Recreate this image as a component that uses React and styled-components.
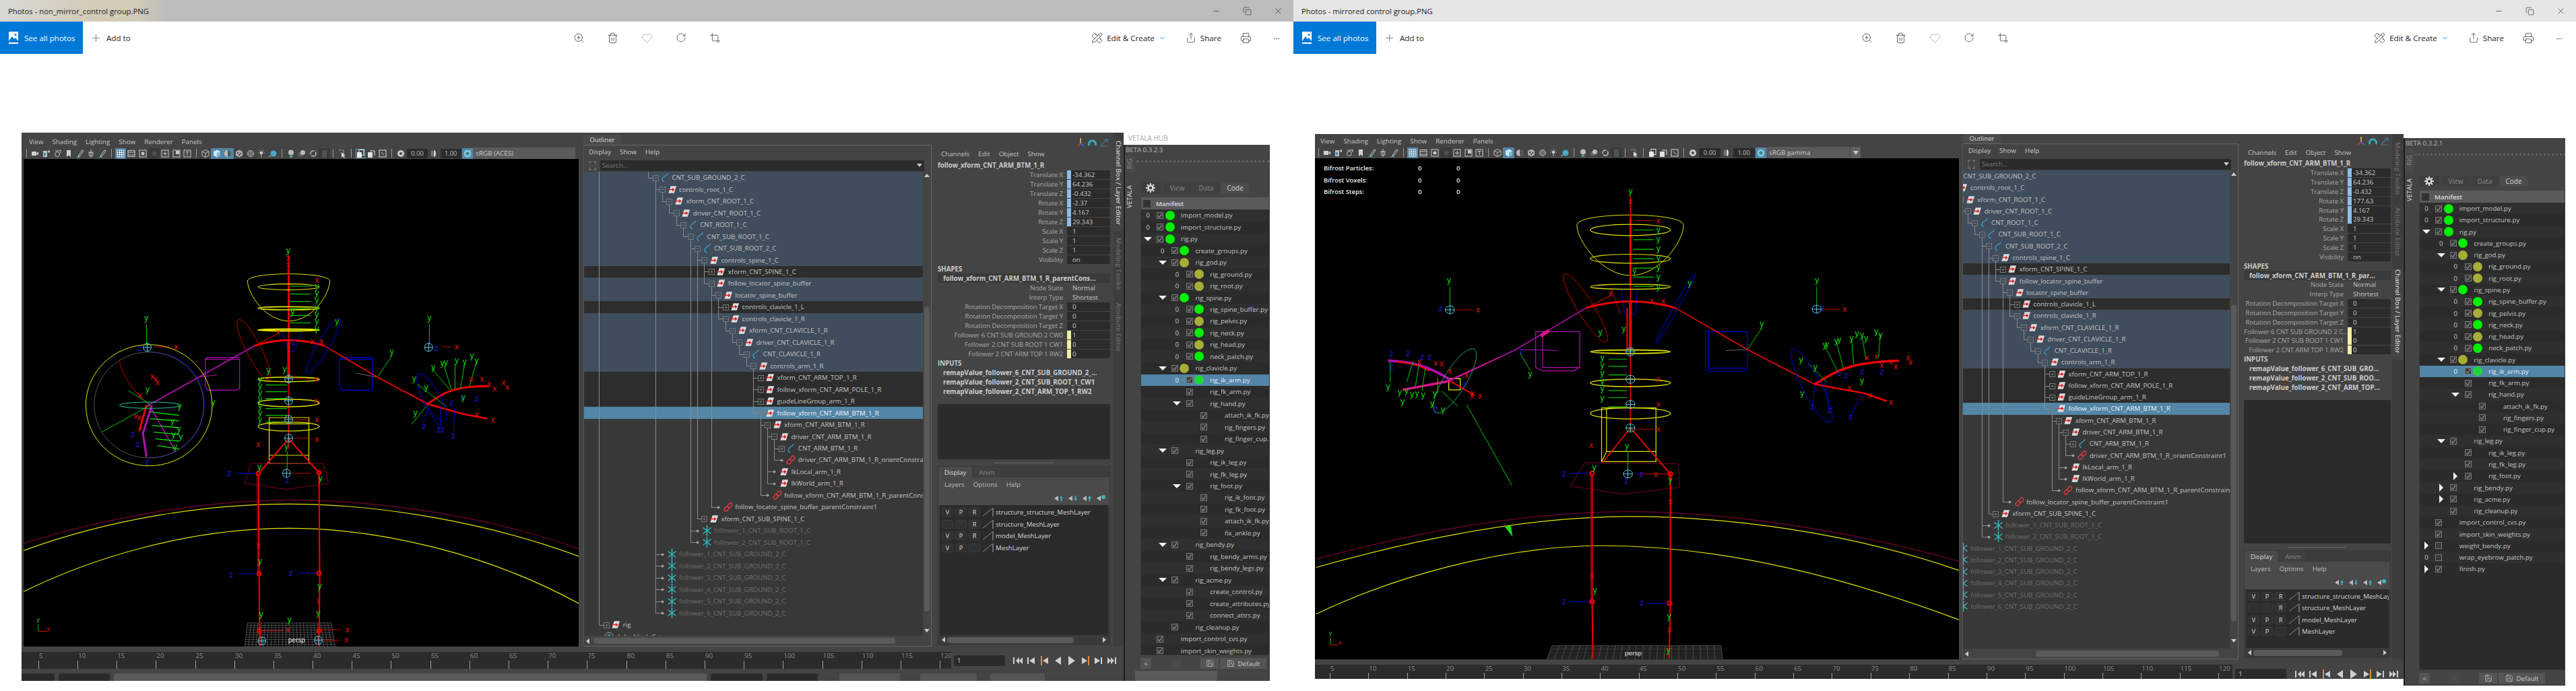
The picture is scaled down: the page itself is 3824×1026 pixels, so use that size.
import React from 'react';
import styled, { createGlobalStyle } from 'styled-components';
import { ZoomIn, Trash2, Heart, RotateCw, Crop, Share, Printer, Plus, Minus, Copy, X, ChevronDown, Save, PencilRuler } from 'lucide-react';

const Global = createGlobalStyle`
  html, body { margin: 0; padding: 0; background: #fff; }
  #root { width: 3824px; height: 1026px; overflow: hidden; }
  * { box-sizing: border-box; }
`;

/* ---------- Photos chrome ---------- */
const Page = styled.div`
  display: flex; width: 3824px; height: 1026px; overflow: hidden; background: #fff;
  font-family: "Open Sans", sans-serif; font-size: 9.7px; color: #c8c8c8;
`;
const Win = styled.section`flex: none; width: ${p => p.$w}px; height: 100%;`;
const TitleBar = styled.header`
  height: 32px; display: flex; align-items: center; padding-left: 12px;
  background: ${p => p.$bg}; color: #222; font-size: 11.3px; font-family: "Open Sans", sans-serif;
`;
const WinCtrls = styled.div`margin-left: auto; display: flex;`;
const WinCtrl = styled.span`width: 46px; height: 32px; display: flex; align-items: center; justify-content: center; color: #222;`;
const TopBar = styled.div`height: 48px; display: grid; grid-template-columns: 1fr auto 1fr; background: #fff; color: #222; font-size: 11.6px;`;
const BarLeft = styled.div`display: flex; align-items: center;`;
const SeeAll = styled.div`width: 123px; height: 48px; background: #0078d7; color: #fff; display: flex; align-items: center; gap: 9px; padding-left: 13px;`;
const AddTo = styled.div`display: flex; align-items: center; gap: 7px; margin-left: 11px;`;
const BarCenter = styled.div`display: flex; align-items: center;`;
const BarCell = styled.span`width: 50.5px; display: flex; justify-content: center; color: ${p => p.$c || '#222'};`;
const BarRight = styled.div`display: flex; align-items: center; justify-content: flex-end; padding-right: 2px;`;
const BarText = styled.span`display: flex; align-items: center; gap: ${p => p.$gap || 6}px; margin-right: ${p => p.$mr || 0}px;`;
const BarIcon = styled.span`width: 46px; margin-left: ${p => p.$ml || 0}px; display: flex; justify-content: center;`;

const Body = styled.div`display: flex; padding: ${p => p.$top}px 0 0 32px;`;
const MayaCol = styled.div`flex: none; width: ${p => p.$w}px; height: ${p => p.$h}px; background: #444; display: flex; flex-direction: column; overflow: hidden;`;
const Panels = styled.div`flex: none; height: ${p => p.$h}px; display: flex;`;

/* ---------- viewport ---------- */
const ViewCol = styled.div`flex: none; width: ${p => p.$w}px; display: flex; flex-direction: column; padding-top: ${p => p.$pt}px; padding-right: ${p => p.$pr}px;`;
const ViewMenu = styled.nav`height: 14px; display: flex; gap: 13px; align-items: center; padding-left: ${p => p.$pl}px; color: #c4c4c4; font-size: 9.8px;`;
const ToolRow = styled.div`height: 17px; margin-top: 2px; display: flex; align-items: center; padding-left: ${p => p.$pl}px; background: ${p => p.$bg || 'transparent'};`;
const TBtn = styled.span`flex: none; width: 16.6px; height: 16px; display: flex; align-items: center; justify-content: center;
  background: ${p => (p.$on ? '#5285a6' : p.$dark ? '#3a3a3a' : 'transparent')};`;
const TSep = styled.span`flex: none; width: 10.2px; height: 13px; display: flex; justify-content: center; &::after { content: ''; width: 1px; background: #999; }`;
const TField = styled.span`flex: none; width: ${p => p.$w}px; height: 14px; margin: 0 1px; background: #2b2b2b; color: #bbb; font-size: 9.4px; display: flex; align-items: center; justify-content: center;`;
const TSpace = styled.span`flex: none; width: ${p => p.$w}px; height: 17px; background: #5a5a5a; color: #ccc; font-size: 9.8px; display: flex; align-items: center; padding-left: 4px; position: relative;`;
const TDrop = styled.span`flex: none; width: 16px; height: 17px; background: #5f5f5f; display: flex; align-items: center; justify-content: center; border-left: 1px solid #444;`;
const Black = styled.div`flex: 1; min-height: 0; margin-top: ${p => p.$mt}px; margin-left: ${p => p.$ml}px; background: #000; position: relative; overflow: hidden;`;
const Scene = styled.svg`display: block; width: 100%; height: 100%; text { font-family: "Liberation Sans", sans-serif; font-size: 12.5px; text-anchor: middle; dominant-baseline: central; }`;
const GizmoText = styled.text`&& { font-size: 9px; }`;
const PerspText = styled.text`&& { font-size: 10px; }`;
const Hud = styled.div`position: absolute; top: 8px; left: 13px; display: grid; grid-template-columns: 140px 57px 20px; row-gap: 4px; color: #e8e8e8; font-size: 9.4px; font-weight: 600; line-height: 13.5px;`;

/* ---------- outliner ---------- */
const OutPanel = styled.div`flex: none; width: ${p => p.$w}px; margin-left: ${p => p.$ml}px; display: flex; flex-direction: column; background: #444;`;
const OutTabRow = styled.div`height: ${p => p.$h}px; display: flex; align-items: flex-end; padding-left: ${p => p.$pl}px;`;
const OutTab = styled.span`height: 15px; width: 56px; background: #4a4a4a; color: #ddd; display: flex; align-items: center; justify-content: center; border-radius: 2px 2px 0 0;`;
const OutBox = styled.div`flex: 1; min-height: 0; display: flex; flex-direction: column; border-top: 1px solid #666; border-left: 1px solid #555; border-right: 1px solid #666; border-bottom: 1px solid #666;`;
const OutMenu = styled.nav`height: 19px; display: flex; gap: 13px; align-items: center; padding-left: ${p => p.$pl}px; color: #ccc; font-size: 9.8px;`;
const SearchRow = styled.div`height: 17px; margin-top: 2px; display: flex; align-items: center; padding-right: 10px;`;
const SearchIcon = styled.span`width: ${p => p.$w}px; display: flex; justify-content: center; flex: none;`;
const SearchInput = styled.div`flex: 1; height: 16px; background: #2b2b2b; border-radius: 2px; color: #777; padding-left: 3px; display: flex; align-items: center; justify-content: space-between; padding-right: 3px;`;
const TreeWrap = styled.div`flex: 1; min-height: 0; display: flex; margin-top: 1px;`;
const Tree = styled.div`flex: 1; min-width: 0; position: relative; overflow: hidden; background: #383838;`;
const Row = styled.div`height: ${p => p.$h}px; display: flex; align-items: center; white-space: nowrap;
  background: ${p => ({ s: '#404d5d', d: '#2d2d2d', l: '#5285a6' }[p.$st] || 'transparent')};
  color: ${p => (p.$dim ? '#6f6f6f' : p.$st === 'l' ? '#f4f4f4' : '#c4c4c4')};`;
const RowIcon = styled.span`flex: none; width: 14px; height: 14px; margin-left: ${p => p.$x}px; margin-right: 3.5px; display: flex; align-items: center; justify-content: center;`;
const Overlay = styled.svg`position: absolute; top: 0; left: 0; pointer-events: none;`;
const VScroll = styled.div`flex: none; width: 12px; display: flex; flex-direction: column; align-items: center; position: relative; padding-top: ${p => p.$top}px;`;
const VThumb = styled.div`width: 8px; height: ${p => p.$h}px; background: #5a5a5a; border-radius: 4px; margin-top: ${p => p.$mt}px; margin-bottom: 26px;`;
const HScroll = styled.div`flex: none; height: 15px; display: flex; align-items: center; padding-left: 3px; color: #bbb;`;
const HThumb = styled.div`height: 9px; width: ${p => p.$w}px; margin-left: ${p => p.$ml}px; background: #5a5a5a; border-radius: 4px;`;

/* ---------- channel box ---------- */
const ChanPanel = styled.div`flex: none; width: ${p => p.$w}px; margin-left: ${p => p.$ml}px; display: flex; background: #444;`;
const ChanMain = styled.div`flex: 1; min-width: 0; display: flex; flex-direction: column; padding: 0 ${p => p.$pr}px 0 ${p => p.$pl}px;`;
const ChanHead = styled.div`height: ${p => p.$h}px; display: flex; align-items: flex-end; justify-content: flex-end; gap: 5px; padding-right: 3px;`;
const ChanMenu = styled.nav`height: 20px; display: flex; gap: 13px; align-items: center; padding-left: ${p => p.$pl}px; color: #c4c4c4; font-size: 9.8px;`;
const ChanName = styled.div`height: ${p => p.$h}px; display: flex; align-items: center; color: #ccc; font-weight: 700; white-space: nowrap; overflow: hidden; padding-left: ${p => p.$pl || 0}px; background: ${p => p.$bg || 'transparent'};`;
const ChanRow = styled.div`height: ${p => p.$h}px; display: flex; align-items: center; justify-content: flex-end; white-space: nowrap;`;
const ChanLabel = styled.span`flex: 1; min-width: 0; text-align: right; color: #a8a8a8; letter-spacing: -0.1px;`;
const ChanVal = styled.span`flex: none; width: 64px; height: 13px; margin-left: 6px; background: ${p => (p.$plain ? 'transparent' : '#2b2b2b')}; border-radius: 2px; color: #c6c6c6; display: flex; align-items: center; gap: 2px;`;
const Chip = styled.span`flex: none; width: 6px; height: 13px; background: ${p => p.$c || 'transparent'};`;
const DarkBox = styled.div`flex: none; height: ${p => p.$h}px; margin-top: ${p => p.$mt}px; background: #2b2b2b; border-radius: 2px;`;
const Handle = styled.div`flex: none; height: 10px; display: flex; align-items: center; justify-content: center; &::after { content: ''; width: 86px; border-top: 1px dotted #888; }`;
const LayerBox = styled.div`flex: 1; min-height: 0; display: flex; flex-direction: column; background: #3c3c3c; border: 1px solid #383838; margin-bottom: 2px;`;
const LayerTabs = styled.div`height: 16px; display: flex; gap: 2px;`;
const LayerTab = styled.span`width: ${p => p.$w}px; background: ${p => (p.$on ? '#4a4a4a' : '#404040')}; color: ${p => (p.$on ? '#ddd' : '#8a8a8a')}; display: flex; align-items: center; justify-content: center; border-radius: 2px 2px 0 0;`;
const LayerMenu = styled.nav`height: 20px; background: #4a4a4a; display: flex; gap: 13px; align-items: center; padding-left: 9px; color: #bbb; font-size: 9.8px;`;
const LayerTools = styled.div`height: 21px; background: #4a4a4a; display: flex; align-items: center; justify-content: flex-end; gap: 7px; padding-right: 5px;`;
const LayerList = styled.div`flex: 1; min-height: 0; margin: 0 2px; background: #2b2b2b; padding-top: 2px; overflow: hidden;`;
const LayerRow = styled.div`height: ${p => p.$h}px; display: flex; align-items: center; padding-left: 3px; white-space: nowrap; color: #d6d6d6;`;
const Vpr = styled.span`flex: none; width: 17px; height: 13px; margin-right: 3px; border-radius: 3px; background: #303030; border: 1px solid #3b3b3b; color: ${p => (p.$dim ? '#3f3f3f' : '#ddd')}; display: flex; align-items: center; justify-content: center; font-size: 9.2px;`;
const LayerSlash = styled.span`flex: none; width: 17px; height: 13px; margin-right: 3px; display: flex;`;
const LayerScroll = styled.div`flex: none; height: 14px; margin: 0 2px; display: flex; align-items: center; justify-content: space-between; padding: 0 3px; background: #3a3a3a;`;
const LayerThumb = styled.div`height: 9px; width: ${p => p.$w}px; background: #5a5a5a; border-radius: 4px; margin-right: auto; margin-left: 3px;`;

const VTabs = styled.aside`flex: none; width: ${p => p.$w}px; display: flex; flex-direction: column; padding-top: 10px; background: #3d3d3d;`;
const VTab = styled.span`writing-mode: vertical-rl; white-space: nowrap; font-size: 9.8px; line-height: ${p => p.$w}px; letter-spacing: .15px; padding: 2px 0 9px; margin-bottom: 8px;
  background: ${p => (p.$on ? '#444' : 'transparent')}; color: ${p => (p.$on ? '#e8e8e8' : '#777')};`;

/* ---------- time bar ---------- */
const TimeRow = styled.div`flex: none; height: ${p => p.$h}px; display: flex; margin-top: ${p => p.$mt}px;`;
const Ruler = styled.div`flex: none; width: ${p => p.$w}px; background: #2b2b2b; display: flex; padding-left: ${p => p.$pl}px; overflow: hidden;`;
const RulerCell = styled.div`flex: none; width: ${p => p.$w}px; display: flex; flex-direction: column; justify-content: space-between;`;
const RulerNum = styled.span`color: #8c8c8c; font-size: 9.8px; line-height: 12px; padding-left: 1px; white-space: nowrap;`;
const RulerTick = styled.span`width: 1px; height: ${p => p.$h}px; background: #a0a0a0;`;
const FrameField = styled.div`flex: none; width: 76px; height: 16px; margin: ${p => p.$mt}px 0 0 ${p => p.$ml}px; background: #2b2b2b; border-radius: 2px; color: #ccc; padding-left: 5px; line-height: 16px;`;
const Play = styled.div`flex: none; display: flex; margin: ${p => p.$mt}px 0 0 ${p => p.$ml}px;`;
const RangeRow = styled.div`flex: 1; min-height: 0; display: flex; gap: 6px; padding-top: 7px;`;
const RangeBlock = styled.div`flex: none; width: ${p => p.$w}px; height: 20px; background: ${p => p.$c}; margin-left: ${p => p.$ml || 0}px; border-radius: 2px;`;

/* ---------- vetala ---------- */
const Vet = styled.aside`flex: none; width: ${p => p.$w}px; display: flex; flex-direction: column;`;
const VetHub = styled.div`flex: none; height: ${p => p.$h}px; padding-left: 7px; color: #aaa; background: #fff; font-size: 10px; line-height: 16px; white-space: nowrap; overflow: hidden;`;
const VetDark = styled.div`flex: 1; min-height: 0; background: #444; border-left: 2px solid #1d1d1d; display: flex; flex-direction: column; overflow: hidden;`;
const VetBeta = styled.div`flex: none; height: 16px; line-height: 16px; padding-left: 1px; color: #bbb;`;
const VetBody = styled.div`flex: 1; min-height: 0; display: flex;`;
const Rail = styled.div`flex: none; width: 14px; display: flex; flex-direction: column;`;
const RailTab = styled.span`writing-mode: vertical-rl; transform: rotate(180deg); height: ${p => p.$h}px; margin-bottom: ${p => p.$mb}px; background: ${p => (p.$on ? '#444' : '#4a4a4a')}; color: ${p => (p.$on ? '#e0e0e0' : '#888')}; text-align: center; line-height: 14px;`;
const VetMain = styled.div`flex: 1; min-width: 0; display: flex; flex-direction: column; padding-left: ${p => p.$pl}px;`;
const VetHandle = styled.div`flex: none; height: 17px; display: flex; align-items: center; margin-left: -6px; &::after { content: ''; flex: 1; border-top: 3px dotted #5e5e5e; }`;
const VetTabs = styled.div`flex: none; height: 16px; margin-top: 23px; display: flex; gap: 2px;`;
const VetGear = styled.span`width: 30px; margin-right: 2px; display: flex; align-items: center; justify-content: center; background: #3e3e3e;`;
const VetTab = styled.span`width: 41px; background: ${p => (p.$on ? '#4c4c4c' : '#404040')}; color: ${p => (p.$on ? '#ddd' : '#888')}; display: flex; align-items: center; justify-content: center; font-size: 10px;`;
const VetTree = styled.div`flex: none; height: ${p => p.$h}px; margin-top: 6px; background: #2b2b2b; border: 1px solid #3a3a3a; border-top: 0; overflow: hidden;`;
const VetHead = styled.div`height: 18px; background: #5a5a5a; display: flex; align-items: center; padding-left: 3px; gap: 8px; color: #ddd; font-weight: 600;
  &::before { content: ''; width: 11px; height: 11px; background: #333; }`;
const VRow = styled.div`height: ${p => p.$h}px; display: flex; align-items: center; white-space: nowrap; padding-left: ${p => 4 + 21.7 * p.$lv}px;
  background: ${p => (p.$sel ? '#5285a6' : p.$odd ? '#2f2f2f' : '#2b2b2b')}; color: ${p => (p.$sel ? '#eef' : '#c4c4c4')};`;
const Tri = styled.span`flex: none; width: 12px; height: 12px; margin-right: 7.3px; display: flex; align-items: center; justify-content: center;`;
const Check = styled.span`flex: none; width: 10px; height: 10px; margin-right: 2.5px; background: #3a3a3a; border: 1px solid #777; display: flex;`;
const Dot = styled.span`flex: none; width: 14px; height: 14px; margin-right: 9px; border-radius: 50%; background: ${p => p.$c || 'transparent'};`;
const VetBtns = styled.div`flex: none; height: 22px; margin-top: 1px; display: flex; align-items: center; color: #bbb;`;
const VBtn = styled.span`flex: none; width: ${p => p.$w}px; height: 16px; margin-left: ${p => p.$ml || 0}px; background: ${p => p.$c || '#555'}; color: ${p => (p.$dim ? '#555' : '#ccc')}; display: flex; align-items: center; justify-content: center; gap: 5px;`;
const VetFoot = styled.div`flex: none; height: 15px; width: 122px; margin-left: -8px; background: #5a5a5a;`;

/* ---------- data ---------- */
const TREE = [
  [0, 'CNT_SUB_GROUND_2_C', 'c', '-', 's'], [1, 'controls_root_1_C', 'x', '-', 's'], [2, 'xform_CNT_ROOT_1_C', 'x', '-', 's'],
  [3, 'driver_CNT_ROOT_1_C', 'x', '-', 's'], [4, 'CNT_ROOT_1_C', 'c', '-', 's'], [5, 'CNT_SUB_ROOT_1_C', 'c', '-', 's'],
  [6, 'CNT_SUB_ROOT_2_C', 'c', '-', 's'], [7, 'controls_spine_1_C', 'x', '-', 's'], [8, 'xform_CNT_SPINE_1_C', 'x', '+', 'd'],
  [8, 'follow_locator_spine_buffer', 'x', '-', 's'], [9, 'locator_spine_buffer', 'x', '-', 's'], [10, 'controls_clavicle_1_L', 'x', '+', 'd'],
  [10, 'controls_clavicle_1_R', 'x', '-', 's'], [11, 'xform_CNT_CLAVICLE_1_R', 'x', '-', 's'], [12, 'driver_CNT_CLAVICLE_1_R', 'x', '-', 's'],
  [13, 'CNT_CLAVICLE_1_R', 'c', '-', 's'], [14, 'controls_arm_1_R', 'x', '-', 's'], [15, 'xform_CNT_ARM_TOP_1_R', 'x', '+', 'd'],
  [15, 'follow_xform_CNT_ARM_POLE_1_R', 'x', '+', 'd'], [15, 'guideLineGroup_arm_1_R', 'x', '+', 'd'], [15, 'follow_xform_CNT_ARM_BTM_1_R', 'x', '-', 'l'],
  [16, 'xform_CNT_ARM_BTM_1_R', 'x', '-', ''], [17, 'driver_CNT_ARM_BTM_1_R', 'x', '-', ''], [18, 'CNT_ARM_BTM_1_R', 'c', '+', ''],
  [18, 'driver_CNT_ARM_BTM_1_R_orientConstraint1', 'k', '.', ''], [17, 'IkLocal_arm_1_R', 'x', '.', ''], [17, 'IkWorld_arm_1_R', 'x', '.', ''],
  [16, 'follow_xform_CNT_ARM_BTM_1_R_parentConstraint1', 'k', '.', ''], [9, 'follow_locator_spine_buffer_parentConstraint1', 'k', '.', ''],
  [7, 'xform_CNT_SUB_SPINE_1_C', 'x', '+', ''], [6, 'follower_1_CNT_SUB_ROOT_1_C', 'a', '.', 'f'], [6, 'follower_2_CNT_SUB_ROOT_1_C', 'a', '.', 'f'],
  [1, 'follower_1_CNT_SUB_GROUND_2_C', 'a', '.', 'f'], [1, 'follower_2_CNT_SUB_GROUND_2_C', 'a', '.', 'f'], [1, 'follower_3_CNT_SUB_GROUND_2_C', 'a', '.', 'f'],
  [1, 'follower_4_CNT_SUB_GROUND_2_C', 'a', '.', 'f'], [1, 'follower_5_CNT_SUB_GROUND_2_C', 'a', '.', 'f'], [1, 'follower_6_CNT_SUB_GROUND_2_C', 'a', '.', 'f'],
  [-7, 'rig', 'x', '+', ''], [-8, 'defaultLightSet', 'l', '', ''],
];
const G = '#00f000', O = '#a8ad38';
const V_COMMON = [
  [0, 'import_model.py', 0, G], [0, 'import_structure.py', 0, G], [0, 'rig.py', 'd', G], [1, 'create_groups.py', 0, G], [1, 'rig_god.py', 'd', O],
  [2, 'rig_ground.py', 0, O], [2, 'rig_root.py', 0, O], [1, 'rig_spine.py', 'd', G], [2, 'rig_spine_buffer.py', 0, G], [2, 'rig_pelvis.py', 0, O],
  [2, 'rig_neck.py', 0, G], [2, 'rig_head.py', 0, O], [2, 'neck_patch.py', 0, G], [1, 'rig_clavicle.py', 'd', O], [2, 'rig_ik_arm.py', 0, '#1fd63a', 1],
  [2, 'rig_fk_arm.py'], [2, 'rig_hand.py', 'd'], [3, 'attach_ik_fk.py'], [3, 'rig_fingers.py'], [3, 'rig_finger_cup.py'], [1, 'rig_leg.py', 'd'],
  [2, 'rig_ik_leg.py'], [2, 'rig_fk_leg.py'],
];
const V_LEFT = [...V_COMMON, [2, 'rig_foot.py', 'd'], [3, 'rig_ik_foot.py'], [3, 'rig_fk_foot.py'], [3, 'attach_ik_fk.py'], [3, 'fix_ankle.py'],
  [1, 'rig_bendy.py', 'd'], [2, 'rig_bendy_arms.py'], [2, 'rig_bendy_legs.py'], [1, 'rig_acme.py', 'd'], [2, 'create_control.py'], [2, 'create_attributes.py'],
  [2, 'connect_attrs.py'], [1, 'rig_cleanup.py'], [0, 'import_control_cvs.py'], [0, 'import_skin_weights.py']];
const V_RIGHT = [...V_COMMON, [2, 'rig_foot.py', 'r'], [1, 'rig_bendy.py', 'r'], [1, 'rig_acme.py', 'r'], [1, 'rig_cleanup.py'], [0, 'import_control_cvs.py'],
  [0, 'import_skin_weights.py'], [0, 'weight_bendy.py', 'r', null, 0, 1], [0, 'wrap_eyebrow_patch.py', 0, null, 0, 1], [0, 'finish.py', 'r']];

const chanRows = (rotX, f6, sub) => ({
  main: [['Translate X', '-34.362', '#8fbfe8'], ['Translate Y', '64.236', '#8fbfe8'], ['Translate Z', '-0.432', '#8fbfe8'], ['Rotate X', rotX, '#8fbfe8'],
    ['Rotate Y', '4.167', '#8fbfe8'], ['Rotate Z', '29.343', '#8fbfe8'], ['Scale X', '1'], ['Scale Y', '1'], ['Scale Z', '1'], ['Visibility', 'on']],
  sub,
  shapes: [['Node State', 'Normal', null, 1], ['Interp Type', 'Shortest', null, 1], ['Rotation Decomposition Target X', '0'], ['Rotation Decomposition Target Y', '0'],
    ['Rotation Decomposition Target Z', '0'], [f6, '1', '#f0f0a8'], ['Follower 2 CNT SUB ROOT 1 CW1', '0', '#f0f0a8'], ['Follower 2 CNT ARM TOP 1 RW2', '0', '#f0f0a8']],
});
const LAYERS = [['V', 'P', 'R', 'structure_structure_MeshLayer'], ['', 'dim', 'R', 'structure_MeshLayer'], ['V', 'P', 'R', 'model_MeshLayer'], ['V', 'P', '', 'MeshLayer']];

/* ---------- small drawings ---------- */
const OutIcon = ({ k }) => {
  if (k === 'x') return <svg width="15" height="13" viewBox="0 0 15 13"><path d="M5 1h9l-3.5 11H1.5z" fill="#dcdcdc" /><path d="M1 6.5h8" stroke="#e02020" strokeWidth="1.6" /><path d="M7.5 3.5 11.5 6.5 7.5 9.5z" fill="#e02020" /></svg>;
  if (k === 'c') return <svg width="12" height="15" viewBox="0 0 12 15"><path d="M10 1C11 4 2 6 2 10c0 2 1 3 3 4" fill="none" stroke="#3f9fd0" strokeWidth="1.3" /></svg>;
  if (k === 'k') return <svg width="14" height="14" viewBox="0 0 14 14"><g fill="none" stroke="#d63a3a" strokeWidth="1.5"><rect x="7" y="0.8" width="5" height="7.5" rx="2.4" transform="rotate(40 9.5 4.5)" /><rect x="2" y="5.8" width="5" height="7.5" rx="2.4" transform="rotate(40 4.5 9.5)" /></g></svg>;
  if (k === 'a') return <svg width="13" height="16" viewBox="0 0 13 16"><g stroke="#35b8c0" strokeWidth="1.5"><path d="M6.5 0v16" /><path d="M0.5 3.5l12 9" /><path d="M12.5 3.5l-12 9" /></g></svg>;
  return <svg width="14" height="14" viewBox="0 0 14 14"><circle cx="7" cy="7" r="6" fill="none" stroke="#aaa" /><circle cx="7" cy="7" r="3" fill="#38a8c0" /></svg>;
};

const Connectors = ({ base, pitch, w }) => {
  const xc = L => Math.round(base + 10.4 * L) + 0.5;
  const yc = i => Math.round(pitch * (i + 0.5)) + 0.5;
  const out = [];
  TREE.forEach(([L, , , m], i) => {
    if (!m) return;
    let j = i - 1;
    while (j >= 0 && TREE[j][0] !== L - 1 && TREE[j][0] >= L) j--;
    const hasParent = j >= 0 && TREE[j][0] === L - 1;
    const yp = hasParent ? yc(j) + 4 : -2;
    const x = xc(L - 1), y = yc(i), ex = xc(L);
    out.push(<path key={'l' + i} d={`M${x} ${yp}V${y}H${m === '.' ? ex : ex - 4}`} fill="none" stroke="#8c8c8c" />);
    if (m === '.') out.push(<circle key={'d' + i} cx={ex} cy={y} r="2" fill="#9a9a9a" />);
    else out.push(
      <g key={'e' + i} fill="none" stroke="#777">
        <rect x={ex - 4} y={y - 4} width="8" height="8" />
        <path d={`M${ex - 2} ${y}h4`} />
        {m === '+' && <path d={`M${ex} ${y - 2}v4`} />}
      </g>);
  });
  return <Overlay width={w} height={pitch * TREE.length}>{out}</Overlay>;
};

const TbGlyphs = {
  cam: <path d="M2 4h7v6H2zM9.5 6 12 4.5v5L9.5 8z" fill="#d0d0d0" />,
  cam2: <g fill="#c0c0c0"><rect x="2" y="3" width="6" height="9" /><path d="M9 3l3-1v4l-3-1z" /><rect x="3" y="6" width="3" height="4" fill="#48a" /></g>,
  cam3: <g fill="none" stroke="#c0c0c0"><circle cx="6" cy="8" r="3.5" /><path d="M3 3h5l3-1v4" /></g>,
  book: <path d="M4 2h6v10L7 9.5 4 12z" fill="#d0d0d0" />,
  pen: <g fill="none" stroke="#c8c8c8"><path d="M10 2 5 9 4 12l3-2 5-7z" /><path d="M1 12.5h6" stroke="#38a8c0" /></g>,
  pen2: <g fill="none" stroke="#c8c8c8"><path d="M7 1v12M3 5h8" /><circle cx="7" cy="8" r="3" /></g>,
  grid: <g fill="none" stroke="#e8e8e8"><rect x="2" y="2" width="10" height="10" /><path d="M2 5.5h10M2 8.5h10M5.5 2v10M8.5 2v10" /></g>,
  film: <g fill="none" stroke="#c8c8c8"><rect x="2" y="2.5" width="10" height="9" /><path d="M2 5h10M2 9h10" /></g>,
  mask: <g><rect x="2" y="2" width="10" height="10" fill="none" stroke="#c8c8c8" /><circle cx="7" cy="7" r="2.5" fill="#c8c8c8" /></g>,
  dark: <circle cx="7" cy="7" r="3.5" fill="#4e4e4e" />,
  fit: <g fill="none" stroke="#c8c8c8"><rect x="2" y="2" width="10" height="10" /><path d="M7 4v6M4 7h6" /></g>,
  res: <g><rect x="2" y="2" width="10" height="10" fill="none" stroke="#c8c8c8" /><rect x="6" y="3" width="5" height="5" fill="#c8c8c8" /></g>,
  text: <g fill="none" stroke="#c8c8c8"><rect x="2" y="2" width="10" height="10" /><path d="M4.5 4.5h5M7 4.5v5.5" /></g>,
  cube: <g fill="none" stroke="#bbb"><path d="M7 1.5 12 4v6l-5 2.5L2 10V4z" /><path d="M2 4l5 2.5L12 4M7 6.5v6" /></g>,
  solid: <g><path d="M7 1.5 12 4v6l-5 2.5L2 10V4z" fill="#cfe8f0" /><path d="M7 6.5 12 4v6l-5 2.5z" fill="#7fb8cc" /></g>,
  half: <g><circle cx="7" cy="7" r="5" fill="#bbb" /><path d="M7 2a5 5 0 0 1 0 10z" fill="#555" /></g>,
  tex: <g fill="#aaa"><path d="M7 1.5 12 4v6l-5 2.5L2 10V4z" /><path d="M4 5h2v2H4zM8 6h2v2H8zM6 8h2v2H6z" fill="#444" /></g>,
  check: <g fill="#aaa"><circle cx="7" cy="7" r="5" /><path d="M3 5h8M3 7h8M3 9h8M5 3v8M7 3v8M9 3v8" stroke="#444" strokeWidth=".7" /></g>,
  light: <g stroke="#ccc"><circle cx="7" cy="6" r="2" fill="#ccc" /><path d="M7 1v1M2 6h1M11 6h1M3.5 2.5l1 1M10.5 2.5l-1 1M7 9v3" /></g>,
  sphere: <g><circle cx="8" cy="7" r="4.5" fill="#4aa8c8" /><path d="M1 11h3" stroke="#ccc" /></g>,
  bulb: <g><circle cx="7" cy="5.5" r="4" fill="#bbb" /><path d="M5 10h4v3H5z" fill="#38a8a8" /></g>,
  ball: <g><circle cx="5.5" cy="8" r="3.5" fill="#666" /><circle cx="8.5" cy="5.5" r="3.5" fill="#bbb" /></g>,
  ring: <circle cx="7" cy="7" r="4" fill="none" stroke="#bbb" strokeWidth="1.6" strokeDasharray="9 2" />,
  box: <rect x="4" y="2" width="7" height="11" fill="#4e5558" />,
  sel: <g><path d="M2 2h7v7" fill="none" stroke="#bbb" strokeDasharray="1.5 1" /><path d="M6 5v8l2-2 2 3 1-1-2-3h3z" fill="#ddd" /></g>,
  iso: <g fill="#e8e8e8"><rect x="2" y="5" width="7" height="8" /><rect x="5" y="1.5" width="7" height="8" fill="none" stroke="#e8e8e8" /></g>,
  iso2: <g fill="#e0e0e0"><rect x="2" y="5" width="7" height="8" /><path d="M5 3h7v7" fill="none" stroke="#e0e0e0" /></g>,
  pen3: <g fill="none" stroke="#ddd"><rect x="2" y="2" width="10" height="10" /><path d="M5 5l4 4" /></g>,
  lens: <g><circle cx="7" cy="7" r="5" fill="#ccc" /><circle cx="7" cy="7" r="2" fill="#444" /></g>,
  gain: <g><path d="M3 3h3v8H3z" fill="#777" /><path d="M7 2c4 0 4 10 0 10z" fill="#ddd" /></g>,
  disc: <g><circle cx="7" cy="7" r="5.5" fill="#7fc8d8" /><circle cx="7" cy="7" r="2.5" fill="#3f7f90" /></g>,
};
const Tb = ({ k, on, dark, border }) => (
  <TBtn $on={on} $dark={dark}><svg width="14" height="14" viewBox="0 0 14 14">{TbGlyphs[k]}{border && <rect x=".5" y=".5" width="13" height="13" fill="none" stroke="#5aa0c8" />}</svg></TBtn>
);
const Toolbar = ({ right }) => {
  const a = ['cam', 'cam2', 'cam3', 'book', 'pen', 'pen2', 'pen'];
  return (
    <>
      <TSep />{a.map((k, i) => <Tb key={i} k={k} />)}<TSep />
      <Tb k="grid" on /><Tb k="film" /><Tb k="mask" /><Tb k="dark" dark /><Tb k="fit" /><Tb k="res" /><Tb k="text" /><TSep />
      <Tb k="cube" /><Tb k="solid" on /><Tb k="half" on={!right} /><Tb k="tex" /><Tb k="check" /><Tb k="light" /><Tb k="sphere" /><TSep />
      <Tb k="bulb" /><Tb k="ball" /><Tb k="ring" /><Tb k="box" dark /><TSep /><Tb k="sel" /><TSep />
      <Tb k="iso" border={!right} /><Tb k="iso2" /><Tb k="pen3" /><TSep /><Tb k="lens" />
      <TField $w={right ? 32 : 31}>0.00</TField><Tb k="gain" /><TField $w={right ? 32 : 31}>1.00</TField><Tb k="disc" on />
      {right
        ? <><TSpace $w={124}>sRGB gamma</TSpace><TDrop><svg width="8" height="6"><path d="M0 0h8L4 6z" fill="#ccc" /></svg></TDrop></>
        : <TSpace $w={152}>sRGB (ACES)</TSpace>}
    </>
  );
};

/* ---------- skeleton scene helpers ---------- */
const L = ({ d, c, w = 1 }) => <path d={d} fill="none" stroke={c} strokeWidth={w} vectorEffect="non-scaling-stroke" />;
const E = ({ e, c, w = 1 }) => <ellipse cx={e[0]} cy={e[1]} rx={e[2]} ry={e[3]} transform={e[4] ? `rotate(${e[4]} ${e[0]} ${e[1]})` : undefined} fill="none" stroke={c} strokeWidth={w} vectorEffect="non-scaling-stroke" />;
const YEL = '#e2e200', RED = '#f00000', CRIM = '#7a0030', MAG = '#b010b0', BLU = '#0000e0', GRN = '#00c800', CY = '#58c8e0';
const labelCol = { x: '#e01010', y: '#10d010', z: '#1818e0' };

const gridLines = (x0, x1, bx0, bx1, y0, y1) => {
  const parts = [];
  for (let i = 0; i <= 24; i++) { const t = i / 24; parts.push(`M${x0 + (x1 - x0) * t} ${y0}L${bx0 + (bx1 - bx0) * t} ${y1}`); }
  for (let i = 0; i <= 10; i++) { const t = i / 10; const y = y0 + (y1 - y0) * t; parts.push(`M${x0 + (bx0 - x0) * t} ${y}L${x1 + (bx1 - x1) * t} ${y}`); }
  return parts.join('');
};

const sceneLeft = {
  sx: 1 / 1.867, ox: 30, oy: 190, vx: 35, vy: 236, w: 824, h: 724,
  lines: [
    ['M10 1882C250 1740 520 1675 744 1675C1000 1675 1300 1760 1548 1908', YEL, 1.2], ['M10 1850C250 1730 520 1658 750 1658C1000 1658 1300 1730 1548 1875', CRIM, 1.2],
    ['M10 2065C180 1930 450 1783 744 1783C1000 1783 1300 1900 1548 2118', YEL, 1.2],
    [gridLines(630, 862, 622, 873, 2205, 2310), '#4a4a4a', 1],
    ['M630 680C640 640 850 640 858 680C858 740 810 860 745 860C680 860 630 740 630 680', YEL, 1],
    ['M690 1290H800V1495H690ZM690 1318H800M692 1458H800', YEL, 1.2], ['M640 1495L840 1495L855 1582L738 1610L622 1582Z', CRIM, 1],
    ['M357 998C450 1000 510 1100 510 1230C510 1370 440 1470 357 1470', BLU, 1], ['M275 1040C290 1130 330 1200 360 1235', '#c00000', 1],
    ['M513 1030H608V1160L600 1168H520L513 1150ZM513 1030L520 1022H608', MAG, 1.2], ['M885 1030H977V1160L970 1168H892L885 1150ZM885 1030L892 1022H977', BLU, 1.2],
    ['M725 905L745 995L760 995L780 905', BLU, 1], ['M545 1100L495 1110', MAG, 1], ['M930 1092L990 1110', '#666', 1],
    ['M350 875V965M1134 875V965M1030 1015L990 1110M740 1440V1520M1085 1320L1130 1230', GRN, 1],
    ['M370 975H415M1168 975H1195M750 1538H805M750 1300H805M750 1382H805M670 2240H730M835 2235H890M835 2282H885M750 1118H805', '#c00000', 1],
    ['M598 1538H655M605 1986H655M770 1983H825', BLU, 1],
    ['M748 705H810M748 740H805M748 773H805M748 805H805M748 835H805M748 868H805M680 1145H740M680 1175H740M680 1205H740M680 1250H740M680 1280H740M680 1310H740', GRN, 1.2],
    ['M744 565V1430', RED, 1.5], ['M744 660V900', RED, 2.5], ['M744 950V1115', RED, 4], ['M650 970Q744 920 843 970', RED, 3], ['M650 970L715 915', RED, 1],
    ['M650 970L495 1110L350 1240', MAG, 1.8], ['M843 970L990 1110L1130 1230', RED, 1.6],
    ['M1125 1235C1170 1180 1200 1150 1300 1150', RED, 3], ['M1130 1230L1230 1275L1295 1295', RED, 2.5], ['M1130 1228L1060 1170', RED, 1.5],
    ['M1190 1165L1140 1070M1195 1165L1175 1060M1205 1165L1205 1050M1220 1160L1232 1050M1245 1150L1265 1040M1100 1140L1180 1240', GRN, 1],
    ['M1130 1250L1115 1330M1165 1240L1165 1340M1205 1250L1200 1350M1120 1230L1165 1340', BLU, 1],
    ['M365 1235L340 1360L350 1465', MAG, 3], ['M360 1240L430 1440', MAG, 1.5], ['M350 1235L330 1350', RED, 3], ['M228 1353L360 1235M360 1230L300 1170', GRN, 1],
    ['M360 1265L440 1280M360 1295L440 1305M365 1325L440 1335M370 1355L440 1365M375 1385L440 1395M380 1415L440 1430', '#10e010', 1.4],
    ['M744 1385L665 1530M744 1385L825 1530', RED, 2], ['M660 1540L662 1990L664 2310', RED, 2], ['M828 1530L830 2000L828 2310', RED, 2], ['M656 1540L658 1980', '#b00000', 1],
  ],
  ells: [[[357, 1235, 175, 270], YEL, 1], [[357, 1234, 152, 236], '#555', 1], [[744, 708, 85, 13], YEL, 1.1], [[744, 803, 85, 7], YEL, 1.6], [[744, 900, 85, 4], YEL, 2.2],
    [[744, 1120, 85, 10], YEL, 1.5], [[744, 1225, 85, 17], YEL, 1.5], [[744, 1330, 85, 20], YEL, 1.2], [[647, 987, 22, 140, -17], '#c00000', 1], [[840, 970, 18, 130, 20], BLU, 1],
    [[360, 1235, 85, 14], '#20c8a0', 1], [[1140, 1200, 25, 110, -18], BLU, 1]],
  cyan: [[352, 977], [1132, 977], [744, 1118], [744, 1215], [744, 1298], [744, 1382], [738, 1538], [670, 2285], [826, 2282]],
  nodes: [[660, 1540], [828, 1535], [662, 1986], [828, 1983], [663, 2240], [828, 2240]],
  persp: [766, 2280], gizmo: [50, 2210, 2242, 75],
  labels: 'y743,545 x743,580 x743,610 x743,640 x822,678 y822,705 y822,735 y822,765 y822,800 y822,830 y822,860 y822,895 y350,845 x432,975 z332,980 y1134,845 x1210,975 z1153,980 y1030,997 x715,910 z758,955 x810,950 x835,950 y878,860 y755,820 y688,1080 y733,1075 y535,1220 x332,1190 x366,1108 x375,1120 x380,1135 y353,1165 y442,1240 x820,1118 x820,1215 y665,1120 y665,1150 y665,1180 y665,1210 y665,1240 y665,1270 y665,1300 x822,1300 x822,1385 x660,1410 y663,1510 y832,1560 z580,1540 z740,1570 y738,1420 x660,1860 y665,1930 z584,1988 z750,1983 y830,2040 x827,2105 y668,2165 y826,2160 y746,2190 x742,2235 x907,2235 x904,2280 x1340,1135 x1350,1155 x1300,1140 x1315,1160 x1280,1120 x1250,1120 y1145,1065 y1170,1048 y1180,1045 y1210,1035 y1232,1040 y1252,1015 y1265,1035 y1092,1115 y1125,1155 z1265,1205 z1195,1225 z1228,1200 y1228,1200 x1265,1275 x1310,1300 y1095,1270 z1120,1330 z1160,1345 z1172,1345 z1200,1370 x320,1285 x330,1290 z312,1365 z325,1410 z352,1488 y422,1305 y440,1340 y425,1365 y445,1375 y430,1420',
};
const sceneRight = {
  sx: 1 / 1.633, ox: 1950, oy: 190, vx: 1952, vy: 234, w: 956, h: 745,
  lines: [
    ['M5 1957C250 1830 520 1730 768 1730C1000 1730 1300 1800 1565 1970', YEL, 1.2], ['M5 1920C250 1800 500 1710 768 1708C1000 1710 1300 1790 1565 1930', CRIM, 1.2],
    ['M5 2165C180 2010 450 1860 700 1860C1000 1860 1300 2010 1565 2190', YEL, 1.2], [gridLines(578, 988, 565, 992, 2305, 2368), '#4a4a4a', 1],
    ['M638 430C640 370 895 370 897 430C897 500 840 655 768 655C700 655 638 500 638 430', YEL, 1],
    ['M698 1245H830V1485H698ZM710 1250V1440H830M710 1440L698 1485', YEL, 1.2], ['M658 1490L885 1495L887 1600L750 1630L622 1594Z', CRIM, 1],
    ['M538 905H645V1065L630 1080H555L538 1065ZM555 905V1065H645', MAG, 1.2], ['M950 905H1052V1065L1045 1082H958L950 1068ZM958 905V1068H1052', BLU, 1.2],
    ['M327 1115H355V1165H327Z', YEL, 1.3], ['M745 710L755 830L780 830L785 710', BLU, 1], ['M720 710L745 830', '#c00000', 1], ['M500 985L592 990', MAG, 1], ['M1000 990L1052 985', '#666', 1],
    ['M330 705V790M1220 705V785M1087 890L1052 985M762 1440V1525M500 1000L525 1080', GRN, 1], ['M345 808H385M1232 805H1278M780 1540H860M780 410H825M780 1340H825M780 1118H825', '#c00000', 1],
    ['M620 1537H675M622 2110H675M808 2117H860M780 1540H790', BLU, 1],
    ['M775 452H825M775 495H825M775 538H825M775 580H825M775 622H825M775 662H825M775 703H825M715 1028H760M715 1060H760M715 1098H760M715 1168H760M715 1200H760M715 1240H760', GRN, 1.2],
    ['M768 300V1350', RED, 1.5], ['M768 395V700', RED, 3], ['M768 770V985', RED, 4], ['M760 800V985', RED, 2], ['M660 800Q770 740 878 800', RED, 3], ['M660 800L720 745', RED, 1],
    ['M660 800L490 985L330 1125', MAG, 1.6], ['M570 900L550 925', '#e01090', 5], ['M330 1120L450 1020', '#e01090', 1.5], ['M878 800L1052 985L1215 1140', RED, 1.6],
    ['M330 1120C280 1060 240 1040 180 1035', MAG, 4], ['M330 1125L215 1165', '#e01090', 3.5], ['M330 1125L390 1190', RED, 2], ['M280 1080C260 1060 240 1045 200 1040', RED, 2],
    ['M1215 1140C1270 1080 1300 1040 1420 1035', RED, 3.5], ['M1215 1140L1335 1180L1390 1215', RED, 2.5],
    ['M1270 1080L1240 970M1285 1070L1268 950M1310 1050L1305 940M1340 1030L1330 925M1370 1020L1375 920M1200 1050L1245 1130M370 1230L480 1590', GRN, 1],
    ['M240 1040L225 1130M255 1050L245 1160M270 1070L262 1170M185 1040L185 1130M300 1110L300 1180M350 1240L310 1170', GRN, 1],
    ['M1215 1150L1210 1240M1240 1130L1250 1260M1330 1180L1300 1290', BLU, 1],
    ['M768 1335L700 1490M768 1335L865 1540', RED, 1.8],
    ['M675 1540L675 2100L677 2365', RED, 2], ['M865 1540L865 2100L862 2365', RED, 2], ['M671 1545L672 2100', '#b00000', 1],
  ],
  ells: [[[768, 452, 97, 25], YEL, 1.2], [[768, 580, 97, 20], YEL, 1.2], [[768, 705, 97, 11], YEL, 1.4], [[768, 995, 97, 8], YEL, 1.6], [[768, 1134, 97, 17], YEL, 1.4], [[768, 1270, 97, 25], YEL, 1.3],
    [[659, 800, 22, 160, -18], '#c00000', 1], [[878, 800, 6, 165, 17], BLU, 1], [[342, 1125, 30, 150, 17], '#2a9a7a', 1], [[1208, 1147, 25, 170, -15], BLU, 1]],
  cyan: [[330, 808], [1220, 805], [768, 995], [768, 1118], [768, 1230], [768, 1335], [762, 1540]],
  nodes: [[675, 1537], [865, 1540], [675, 2110], [863, 2117]],
  arrow: 'M463 1775L482 1820L478 1770Z',
  persp: [775, 2338], gizmo: [40, 2270, 2302, 60],
  labels: 'y768,280 x768,325 x836,410 y836,450 y836,492 y836,535 y836,578 y836,620 y836,660 y836,705 y778,635 x720,735 x820,768 x848,768 y912,687 y328,677 x398,808 z307,803 y1221,677 x1288,805 z1235,803 y1087,872 y695,908 y752,892 y525,1092 z503,990 z188,1003 z228,1003 z262,1018 z280,1018 x310,1048 x295,1045 x255,1040 x330,1080 x370,1098 x403,1192 x383,1192 x385,1180 y180,1150 y208,1175 y225,1168 y238,1182 y250,1180 y265,1185 y293,1180 y215,1215 y287,1225 y313,1252 z296,1250 z188,1060 z365,1140 x1442,1020 x1448,1042 x1412,1060 x1400,1040 x1378,1055 x1365,1015 x1342,1020 y1365,905 y1375,920 y1340,935 y1330,918 y1318,912 y1305,935 y1275,940 y1268,945 y1245,960 y1240,965 y1182,1030 y1217,1062 z1378,1085 z1330,1085 z1292,1100 z1275,1090 x1300,1155 x1350,1188 x1400,1220 y1330,1122 y1185,1180 z1210,1240 z1252,1255 z1303,1285 x836,1118 x836,1228 y700,1020 y700,1055 y700,1090 y700,1125 y700,1160 y700,1200 x836,1340 y760,1415 x673,1412 y680,1512 z607,1537 z795,1541 x830,1541 z758,1572 y865,1565 x865,1665 x674,1992 y682,2057 z607,2110 z795,2116 y862,2175 x862,2235 y860,2325',
};

const SceneView = ({ s }) => {
  const X = x => s.ox - s.vx + x * s.sx;
  const Y = y => s.oy - s.vy + y / 3;
  const labs = s.labels.split(' ').map(t => { const [a, b] = t.slice(1).split(','); return [t[0], +a, +b]; });
  const [gx, gy0, gy1, gx1] = s.gizmo;
  return (
    <Scene viewBox={`0 0 ${s.w} ${s.h}`}>
      <g transform={`translate(${s.ox - s.vx} ${s.oy - s.vy}) scale(${s.sx} ${1 / 3})`}>
        {s.lines.map(([d, c, w], i) => <L key={i} d={d} c={c} w={w} />)}
        {s.ells.map(([e, c, w], i) => <E key={i} e={e} c={c} w={w} />)}
        {s.arrow && <path d={s.arrow} fill="#10e010" />}
        {s.cyan.map(([x, y], i) => <g key={i}><E e={[x, y, 11, 18]} c={CY} w={1} /><L d={`M${x - 11} ${y}H${x + 11}M${x} ${y - 18}V${y + 18}`} c={CY} /></g>)}
        {s.nodes.map(([x, y], i) => <E key={i} e={[x, y, 5, 9]} c={RED} w={2} />)}
        <L d={`M${gx} ${gy0}V${gy1}`} c={GRN} /><L d={`M${gx} ${gy1}H${gx1}`} c="#e01010" />
      </g>
      {labs.map(([t, x, y], i) => <text key={i} x={X(x)} y={Y(y)} fill={labelCol[t]}>{t}</text>)}
      <GizmoText x={X(gx)} y={Y(gy0 - 20)} fill={labelCol.y}>y</GizmoText>
      <GizmoText x={X(gx1 + 3)} y={Y(gy1 - 10)} fill={labelCol.x}>x</GizmoText>
      <PerspText x={X(s.persp[0])} y={Y(s.persp[1])} fill="#e8e8e8">persp</PerspText>
    </Scene>
  );
};

const PLAY = ['M1 2h2v10H1zM10 2v10L5 7zM15 2v10L10 7z', 'M2 2h2v10H2zM13 2v10L5 7z', null, 'M12 1v12L3 7z', 'M3 0v14L13 7z', null, 'M2 2v10l8-5zM11 2h2v10h-2z', 'M1 2v10l5-5zM6 2v10l5-5zM12 2h2v10h-2z'];
const PlayIcon = ({ i }) => {
  const d = PLAY[i];
  return (
    <svg width="20" height="14" viewBox="0 0 16 14">
      {i === 2 && <><rect x="2" y="0" width="2" height="14" fill="#e08a3c" /><path d="M13 2v10L5 7z" fill="#ccc" /></>}
      {i === 5 && <><rect x="12" y="0" width="2" height="14" fill="#e08a3c" /><path d="M3 2v10l8-5z" fill="#ccc" /></>}
      {d && <path d={d} fill="#d0d0d0" />}
    </svg>
  );
};
const LayerIcon = ({ c, up }) => (
  <svg width="14" height="10" viewBox="0 0 14 10"><path d="M0 5l6-4v8z" fill="#bbb" /><path d={up === 'c' ? 'M7 3a3 3 0 1 0 6 0a3 3 0 1 0-6 0z' : up ? 'M8 5l2.5-4L13 5h-1.5v4h-2V5z' : 'M8 5l2.5 4L13 5h-1.5V1h-2v4z'} fill={c} /></svg>
);
const TriIcon = ({ dir }) => (
  <svg width="12" height="12" viewBox="0 0 12 12">{dir === 'd' ? <path d="M0 3h12L6 9z" fill="#f4f4f4" /> : <path d="M3 0v12L9 6z" fill="#f4f4f4" />}</svg>
);
const CheckMark = () => <svg width="8" height="8" viewBox="0 0 8 8"><path d="M1 4l2 3 4-6" fill="none" stroke="#aaa" /></svg>;
const Gear = () => <svg width="14" height="14" viewBox="0 0 14 14"><circle cx="7" cy="7" r="3.4" fill="none" stroke="#ddd" strokeWidth="2.4" /><path d="M7 0v3M7 11v3M0 7h3M11 7h3M2 2l2 2M10 10l2 2M12 2l-2 2M4 10l-2 2" stroke="#ddd" strokeWidth="2" /></svg>;

/* ---------- assembled pieces ---------- */
const Outliner = ({ w, ml, tabH, tabPl, menuPl, iconW, base, pitch, treeW, scrollTop, thumbTop, thumbH, hMl, hW }) => (
  <OutPanel $w={w} $ml={ml}>
    <OutTabRow $h={tabH} $pl={tabPl}><OutTab>Outliner</OutTab></OutTabRow>
    <OutBox>
      <OutMenu $pl={menuPl}><span>Display</span><span>Show</span><span>Help</span></OutMenu>
      <SearchRow>
        <SearchIcon $w={iconW}><svg width="13" height="14" viewBox="0 0 13 14"><path d="M2 4V1h3M8 1h3v3M11 10v3H8M5 13H2v-3M2 7h1M10 7h1" fill="none" stroke="#888" /></svg></SearchIcon>
        <SearchInput>Search...<svg width="8" height="5"><path d="M0 0h8L4 5z" fill="#ccc" /></svg></SearchInput>
      </SearchRow>
      <TreeWrap>
        <Tree>
          {TREE.map(([lv, name, ic, , st], i) => (
            <Row key={i} $h={pitch} $st={st} $dim={st === 'f'}>
              <RowIcon $x={base + 10.4 * lv + 7.5}><OutIcon k={ic} /></RowIcon>{name}
            </Row>
          ))}
          <Connectors base={base} pitch={pitch} w={treeW} />
        </Tree>
        <VScroll $top={scrollTop}>
          <svg width="8" height="5"><path d="M0 5h8L4 0z" fill="#ccc" /></svg>
          <VThumb $h={thumbH} $mt={thumbTop} />
          <svg width="8" height="5"><path d="M0 0h8L4 5z" fill="#ccc" /></svg>
        </VScroll>
      </TreeWrap>
      <HScroll>
        <svg width="5" height="8"><path d="M5 0v8L0 4z" fill="#ccc" /></svg>
        <HThumb $ml={hMl} $w={hW} />
      </HScroll>
    </OutBox>
  </OutPanel>
);

const Channel = ({ w, ml, pl, pr, headH, pitch, menuPl, rows, boxH, inputs, tabs, tabW, listPitch, thumb }) => (
  <ChanPanel $w={w} $ml={ml}>
    <ChanMain $pl={pl} $pr={pr}>
      <ChanHead $h={headH}>
        <svg width="12" height="13" viewBox="0 0 12 13"><path d="M6 0v8" stroke="#c96" strokeWidth="2" /><path d="M6 8 1 12" stroke="#c33" strokeWidth="2" /><path d="M6 8l5 4" stroke="#36c" strokeWidth="2" /></svg>
        <svg width="13" height="13" viewBox="0 0 13 13"><path d="M2 11A5 5 0 1 1 11 11" fill="none" stroke="#38a8b8" strokeWidth="3" /></svg>
        <svg width="12" height="13" viewBox="0 0 12 13"><path d="M1 11 10 2M6 2h5v5M0 12h11" fill="none" stroke="#4a7f98" strokeWidth="1.2" /></svg>
      </ChanHead>
      <ChanMenu $pl={menuPl}><span>Channels</span><span>Edit</span><span>Object</span><span>Show</span></ChanMenu>
      <ChanName $h={pitch}>follow_xform_CNT_ARM_BTM_1_R</ChanName>
      {rows.main.map(([l, v, c]) => <ChanRow key={l} $h={pitch}><ChanLabel>{l}</ChanLabel><ChanVal><Chip $c={c} />{v}</ChanVal></ChanRow>)}
      <ChanName $h={pitch}>SHAPES</ChanName>
      <ChanName $h={pitch} $pl={8} $bg="#3a3a3a">{rows.sub}</ChanName>
      {rows.shapes.map(([l, v, c, plain]) => <ChanRow key={l} $h={pitch}><ChanLabel>{l}</ChanLabel><ChanVal $plain={plain}><Chip $c={c} />{v}</ChanVal></ChanRow>)}
      <ChanName $h={pitch}>INPUTS</ChanName>
      {inputs.map(t => <ChanName key={t} $h={pitch} $pl={8}>{t}</ChanName>)}
      <DarkBox $h={boxH} $mt={12} />
      <Handle />
      <LayerBox>
        <LayerTabs><LayerTab $on $w={50}>Display</LayerTab><LayerTab $w={40}>Anim</LayerTab></LayerTabs>
        <LayerMenu><span>Layers</span><span>Options</span><span>Help</span></LayerMenu>
        <LayerTools><LayerIcon c="#3aa8c0" up /><LayerIcon c="#3aa8c0" /><LayerIcon c="#3ab8c8" up /><LayerIcon c="#3ab8c8" up="c" /></LayerTools>
        <LayerList>
          {LAYERS.map(([v, p, r, n]) => (
            <LayerRow key={n} $h={listPitch}>
              <Vpr>{v}</Vpr>
              <Vpr $dim={p === 'dim'}>P</Vpr>
              <Vpr>{r}</Vpr>
              <LayerSlash><svg width="17" height="13" viewBox="0 0 17 13"><path d="M1 12 15 1" stroke="#888" /><path d="M16 0v13" stroke="#aaa" /></svg></LayerSlash>
              {n}
            </LayerRow>
          ))}
        </LayerList>
        <LayerScroll>
          <svg width="5" height="8"><path d="M5 0v8L0 4z" fill="#ccc" /></svg>
          <LayerThumb $w={thumb} />
          <svg width="5" height="8"><path d="M0 0v8L5 4z" fill="#ccc" /></svg>
        </LayerScroll>
      </LayerBox>
    </ChanMain>
    <VTabs $w={tabW}>
      {tabs.map(([t, on]) => <VTab key={t} $w={tabW} $on={on}>{t}</VTab>)}
    </VTabs>
  </ChanPanel>
);

const Vetala = ({ w, topH, hub, beta, pl, treeH, pitch, items, ribH, vetH, ribMb, footer }) => (
  <Vet $w={w}>
    <VetHub $h={topH}>{hub}</VetHub>
    <VetDark>
      <VetBeta>{beta}</VetBeta>
      <VetBody>
        <Rail>
          <RailTab $h={ribH} $mb={ribMb}>RIG</RailTab>
          <RailTab $h={vetH} $mb={0} $on>VETALA</RailTab>
        </Rail>
        <VetMain $pl={pl}>
          <VetHandle />
          <VetTabs><VetGear><Gear /></VetGear><VetTab>View</VetTab><VetTab>Data</VetTab><VetTab $on>Code</VetTab></VetTabs>
          <VetTree $h={treeH}>
            <VetHead>Manifest</VetHead>
            {items.map(([lv, name, tri, dot, sel, off], i) => (
              <VRow key={i} $h={pitch} $lv={lv} $odd={i % 2 === 0} $sel={sel}>
                <Tri>{tri && <TriIcon dir={tri} />}</Tri>
                <Check>{!off && <CheckMark />}</Check>
                <Dot $c={dot} />
                {name}
              </VRow>
            ))}
          </VetTree>
          <VetBtns>
            <VBtn $w={16}>&lt;</VBtn><VBtn $w={16} $ml={29} $dim $c="#484848">&gt;</VBtn>
            <VBtn $w={27} $ml={28}><Save size={12} strokeWidth={1.4} /></VBtn>
            <VBtn $w={69} $ml={2}><Save size={12} strokeWidth={1.4} />Default</VBtn>
          </VetBtns>
          {footer && <VetFoot />}
        </VetMain>
      </VetBody>
    </VetDark>
  </Vet>
);

const Ruler5 = ({ w, pl, pitch, tickH }) => (
  <Ruler $w={w} $pl={pl}>
    {Array.from({ length: 24 }, (_, i) => (
      <RulerCell key={i} $w={pitch}><RulerNum>{(i + 1) * 5}</RulerNum><RulerTick $h={tickH} /></RulerCell>
    ))}
  </Ruler>
);
const PlayBar = ({ ml, mt }) => <Play $ml={ml} $mt={mt}>{PLAY.map((_, i) => <PlayIcon key={i} i={i} />)}</Play>;

const Chrome = ({ title, bg }) => (
  <>
    <TitleBar $bg={bg}>
      {title}
      <WinCtrls>
        <WinCtrl><Minus size={13} strokeWidth={1.2} /></WinCtrl>
        <WinCtrl><Copy size={13} strokeWidth={1.1} /></WinCtrl>
        <WinCtrl><X size={15} strokeWidth={1} /></WinCtrl>
      </WinCtrls>
    </TitleBar>
    <TopBar>
      <BarLeft>
        <SeeAll>
          <svg width="14" height="18" viewBox="0 0 14 18"><path d="M0 0h14v18H0z" fill="#fff" /><path d="M0 14 5 7l3 4 2-2 4 5v2H0z" fill="#0078d7" /><circle cx="10" cy="4.5" r="1.6" fill="#0078d7" /></svg>
          See all photos
        </SeeAll>
        <AddTo><Plus size={17} strokeWidth={1} color="#555" />Add to</AddTo>
      </BarLeft>
      <BarCenter>
        <BarCell><ZoomIn size={17} strokeWidth={1} /></BarCell>
        <BarCell><Trash2 size={17} strokeWidth={1} /></BarCell>
        <BarCell $c="#9a9a9a"><Heart size={17} strokeWidth={1} /></BarCell>
        <BarCell><RotateCw size={16} strokeWidth={1} /></BarCell>
        <BarCell><Crop size={17} strokeWidth={1} /></BarCell>
      </BarCenter>
      <BarRight>
        <BarText $mr={29}><PencilRuler size={17} strokeWidth={1} />Edit &amp; Create<ChevronDown size={11} strokeWidth={2} color="#0078d7" /></BarText>
        <BarText $gap={6}><Share size={16} strokeWidth={1} />Share</BarText>
        <BarIcon $ml={13}><Printer size={17} strokeWidth={1} /></BarIcon>
        <BarIcon>···</BarIcon>
      </BarRight>
    </TopBar>
  </>
);

const MENU = ['View', 'Shading', 'Lighting', 'Show', 'Renderer', 'Panels'];

export default function App() {
  const chL = chanRows('-2.37', 'Follower 6 CNT SUB GROUND 2 CW0', 'follow_xform_CNT_ARM_BTM_1_R_parentCons...');
  const chR = chanRows('177.63', 'Follower 6 CNT SUB GROUND 2 C...', 'follow_xform_CNT_ARM_BTM_1_R_par...');
  return (
    <Page>
      <Global />
      <Win $w={1920}>
        <Chrome title="Photos - non_mirror_control group.PNG" bg="linear-gradient(90deg,#d8d8d6 0,#d4ccb8 130px,#d2cbb8 200px,#bcbcbc 250px,#bcbcbc 100%)" />
        <Body $top={117}>
          <MayaCol $w={1636} $h={814}>
            <Panels $h={763}>
              <ViewCol $w={831} $pt={6} $pr={4}>
                <ViewMenu $pl={11}>{MENU.map(m => <span key={m}>{m}</span>)}</ViewMenu>
                <ToolRow $pl={2}><Toolbar /></ToolRow>
                <Black $mt={0} $ml={3}>
                  <SceneView s={sceneLeft} />
                </Black>
              </ViewCol>
              <Outliner w={517} ml={3} tabH={18} tabPl={0} menuPl={7} iconW={24} base={105.6} pitch={17.47} treeW={503} scrollTop={3} thumbTop={192} thumbH={453} hMl={6} hW={448} />
              <Channel w={281} ml={4} pl={5} pr={5} headH={21} pitch={14} menuPl={5} rows={chL} boxH={82} tabW={15}
                inputs={['remapValue_follower_6_CNT_SUB_GROUND_2_...', 'remapValue_follower_2_CNT_SUB_ROOT_1_CW1', 'remapValue_follower_2_CNT_ARM_TOP_1_RW2']}
                tabs={[['Channel Box / Layer Editor', 1], ['Modeling Toolkit'], ['Attribute Editor']]} listPitch={17.47} thumb={188} />
            </Panels>
            <TimeRow $h={25} $mt={8}>
              <Ruler5 w={1380} pl={24.8} pitch={58.2} tickH={12} />
              <FrameField $mt={5} $ml={4}>1</FrameField>
              <PlayBar ml={9} mt={6} />
            </TimeRow>
            <RangeRow>
              <RangeBlock $w={49} $c="#2b2b2b" /><RangeBlock $w={76} $c="#2b2b2b" />
              <RangeBlock $w={880} $c="#5a5a5a" /><RangeBlock $w={77} $c="#2b2b2b" /><RangeBlock $w={76} $c="#2b2b2b" />
              <RangeBlock $w={90} $ml={26} $c="#555" /><RangeBlock $w={84} $ml={24} $c="#555" /><RangeBlock $w={81} $ml={14} $c="#555" />
            </RangeRow>
          </MayaCol>
          <Vetala w={217} topH={18} hub="VETALA HUB" beta="BETA  0.3.2.3" pl={9} treeH={680} pitch={17.47} items={V_LEFT} ribH={24} vetH={45} ribMb={15} footer />
        </Body>
      </Win>
      <Win $w={1904}>
        <Chrome title="Photos - mirrored control group.PNG" bg="#e6e6e6" />
        <Body $top={119}>
          <MayaCol $w={1616} $h={809}>
            <Panels $h={780}>
              <ViewCol $w={958} $pt={3} $pr={2}>
                <ViewMenu $pl={8}>{MENU.map(m => <span key={m}>{m}</span>)}</ViewMenu>
                <ToolRow $pl={0}><Toolbar right /></ToolRow>
                <Black $mt={0} $ml={0}>
                  <SceneView s={sceneRight} />
                  <Hud>
                    <span>Bifrost Particles:</span><span>0</span><span>0</span>
                    <span>Bifrost Voxels:</span><span>0</span><span>0</span>
                    <span>Bifrost Steps:</span><span>0</span><span>0</span>
                  </Hud>
                </Black>
              </ViewCol>
              <Outliner w={410} ml={3} tabH={14} tabPl={1} menuPl={8} iconW={25} base={-24.5} pitch={17.28} treeW={396} scrollTop={3} thumbTop={192} thumbH={470} hMl={100} hW={272} />
              <Channel w={243} ml={2} pl={6} pr={2} headH={17} pitch={13.85} menuPl={6} rows={chR} boxH={213} tabW={17}
                inputs={['remapValue_follower_6_CNT_SUB_GRO...', 'remapValue_follower_2_CNT_SUB_ROO...', 'remapValue_follower_2_CNT_ARM_TOP...']}
                tabs={[['Modeling Toolkit'], ['Attribute Editor'], ['Channel Box / Layer Editor', 1]]} listPitch={17.28} thumb={132} />
            </Panels>
            <TimeRow $h={21} $mt={8}>
              <Ruler5 w={1362} pl={22} pitch={57.35} tickH={9} />
              <FrameField $mt={6} $ml={4}>1</FrameField>
              <PlayBar ml={10} mt={7} />
            </TimeRow>
          </MayaCol>
          <Vetala w={240} topH={6} hub="" beta="BETA  0.3.2.1" pl={7} treeH={712} pitch={17.28} items={V_RIGHT} ribH={34} vetH={35} ribMb={10} />
        </Body>
      </Win>
    </Page>
  );
}
